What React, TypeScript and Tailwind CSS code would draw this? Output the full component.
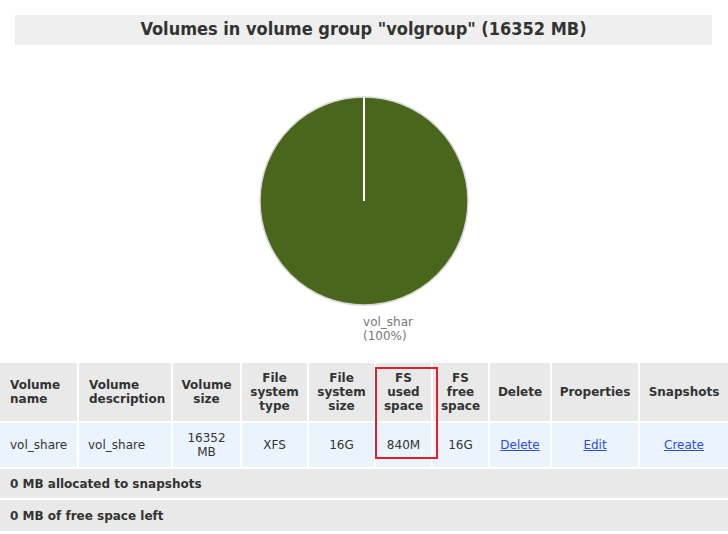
import React from 'react';

const cols = '77px 92px 67px 65px 65px 55px 55px 60px 86px 88px';

export default function App() {
  const headers = [
    { label: 'Volume\nname', left: true },
    { label: 'Volume\ndescription', left: true },
    { label: 'Volume\nsize' },
    { label: 'File\nsystem\ntype' },
    { label: 'File\nsystem\nsize' },
    { label: 'FS\nused\nspace' },
    { label: 'FS\nfree\nspace' },
    { label: 'Delete' },
    { label: 'Properties' },
    { label: 'Snapshots' },
  ];

  return (
    <div className="w-[728px] h-[534px] bg-white overflow-hidden" style={{ fontFamily: '"DejaVu Sans", Verdana, sans-serif' }}>
      {/* heading */}
      <div className="mt-[15px] ml-[15px] mr-[16px] h-[30px] bg-[#efefef] flex items-center justify-center">
        <h1 className="text-[18px] leading-[22px] pb-[2px] font-bold text-[#333]" style={{ fontFamily: '"DejaVu Sans Condensed", "DejaVu Sans", Tahoma, sans-serif' }}>
          Volumes in volume group "volgroup" (16352 MB)
        </h1>
      </div>

      {/* pie chart */}
      <div className="flex flex-col items-center mt-[50px]">
        <svg width="212" height="212" viewBox="0 0 212 212">
          <circle cx="106" cy="106" r="104" fill="#4a651c" stroke="#d6d6d6" strokeWidth="1.5" />
          <line x1="106" y1="2" x2="106" y2="106" stroke="#ffffff" strokeWidth="2" />
        </svg>
        <div className="mt-[8px] pl-[48px] text-[12px] leading-[14px] text-[#777]" style={{ fontFamily: 'Tahoma, "DejaVu Sans", sans-serif' }}>
          <div>vol_shar</div>
          <div>(100%)</div>
        </div>
      </div>

      {/* volumes table */}
      <div className="relative mt-[20px] text-[12px] leading-[14px] text-[#333]">
        <div className="grid gap-[2px]" style={{ gridTemplateColumns: cols }}>
          {headers.map((h, i) => (
            <div
              key={i}
              className={`h-[58px] bg-[#e9e9e9] font-bold flex items-center whitespace-pre-line ${h.left ? 'justify-start text-left pl-[10px]' : 'justify-center text-center'}`}
            >
              {h.label}
            </div>
          ))}
          <div className="h-[44px] bg-[#ebf4fc] flex items-center pl-[10px]">vol_share</div>
          <div className="h-[44px] bg-[#ebf4fc] flex items-center pl-[9px]">vol_share</div>
          <div className="h-[44px] bg-[#ebf4fc] flex items-center justify-center text-center">16352<br />MB</div>
          <div className="h-[44px] bg-[#ebf4fc] flex items-center justify-center">XFS</div>
          <div className="h-[44px] bg-[#ebf4fc] flex items-center justify-center">16G</div>
          <div className="h-[44px] bg-[#ebf4fc] flex items-center justify-center">840M</div>
          <div className="h-[44px] bg-[#ebf4fc] flex items-center justify-center">16G</div>
          <div className="h-[44px] bg-[#ebf4fc] flex items-center justify-center">
            <a href="#" className="text-[#2a4fd6] underline">Delete</a>
          </div>
          <div className="h-[44px] bg-[#ebf4fc] flex items-center justify-center">
            <a href="#" className="text-[#2a4fd6] underline">Edit</a>
          </div>
          <div className="h-[44px] bg-[#ebf4fc] flex items-center justify-center">
            <a href="#" className="text-[#2a4fd6] underline">Create</a>
          </div>
        </div>
        <div className="mt-[2px] h-[29px] bg-[#e9e9e9] flex items-center pl-[10px] font-bold">0 MB allocated to snapshots</div>
        <div className="mt-[2px] h-[31px] bg-[#e9e9e9] flex items-center pl-[10px] font-bold">0 MB of free space left</div>

        {/* highlight box */}
        <div className="absolute left-[375px] top-[4px] w-[63px] h-[92px] border-2 border-[#e0202a]" />
      </div>
    </div>
  );
}
